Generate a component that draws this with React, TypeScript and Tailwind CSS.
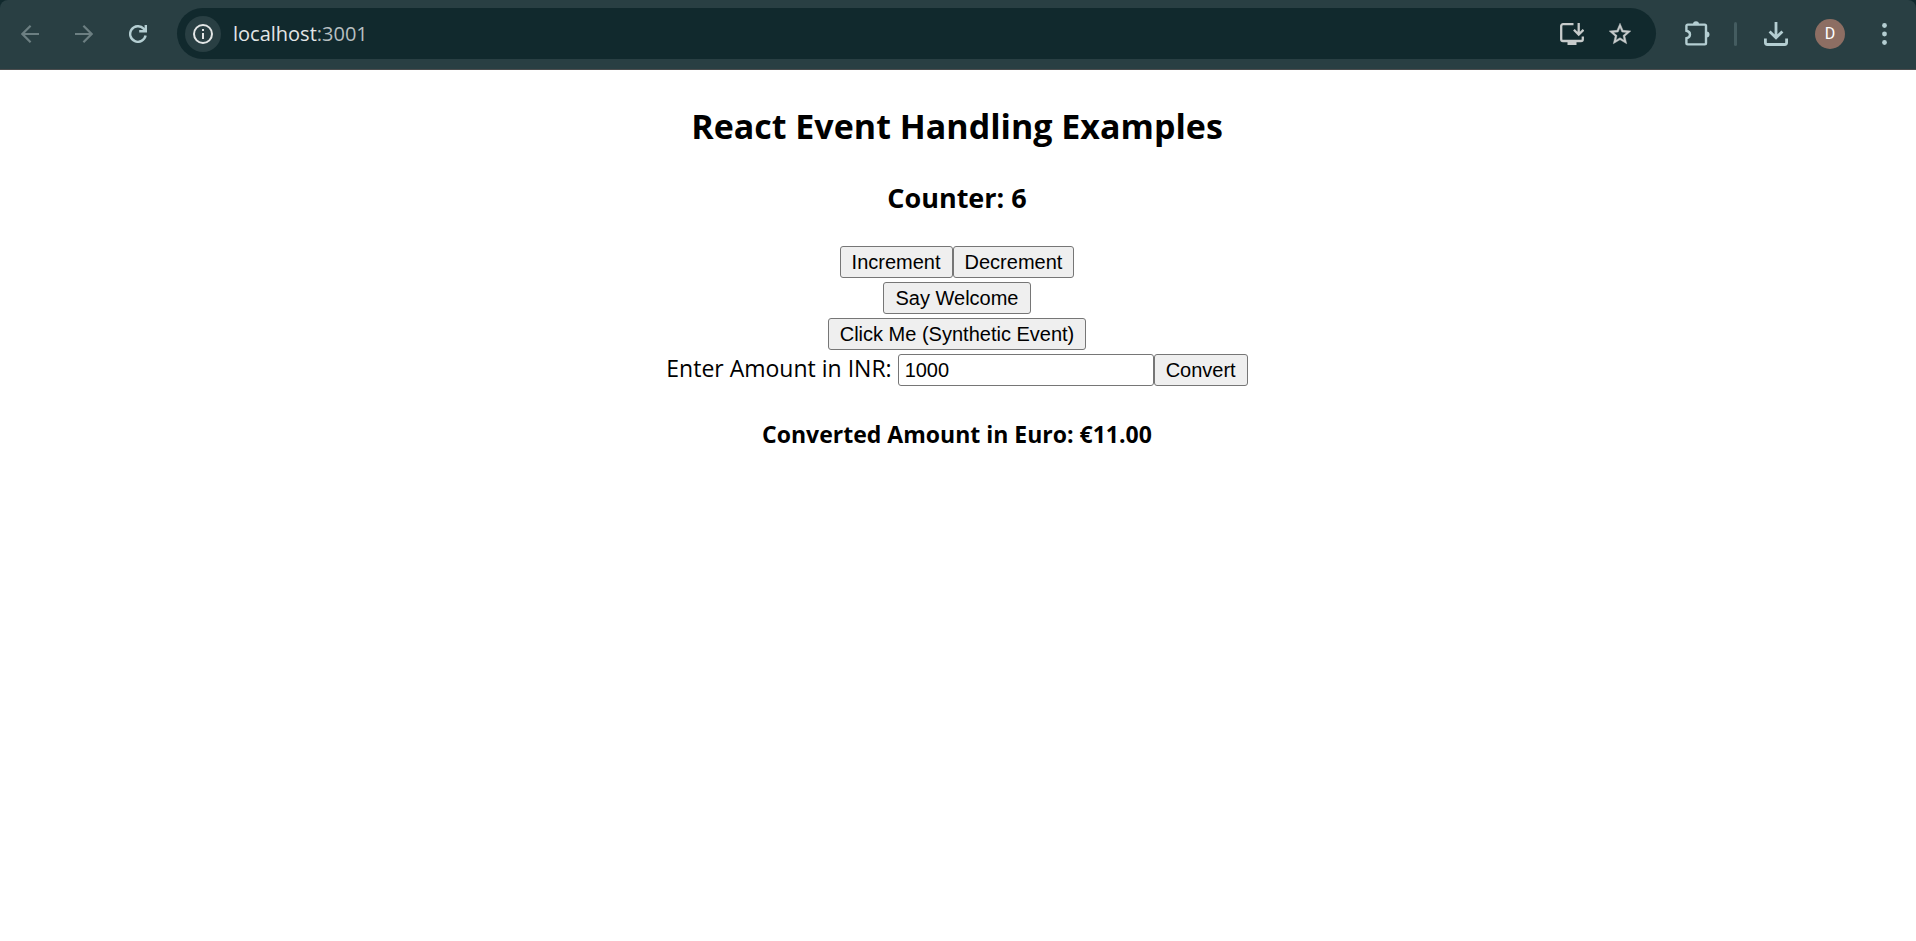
import { useState } from "react";
import type { ReactNode } from "react";

function ToolbarButton({
  label,
  disabled = false,
  children,
}: {
  label: string;
  disabled?: boolean;
  children: ReactNode;
}) {
  return (
    <button
      type="button"
      aria-label={label}
      disabled={disabled}
      className="flex size-9 shrink-0 items-center justify-center rounded-full text-[#b4ced2] disabled:text-[#6c7f82]"
    >
      {children}
    </button>
  );
}

function BrowserBar() {
  return (
    <div className="bg-[#11292d]">
      <header className="flex h-[70px] items-center rounded-t-lg border-b border-[#4b4d4e] bg-[#293f43] pr-3.5 pb-0.5 pl-3">
        <nav className="flex gap-[18px]" aria-label="History">
          <ToolbarButton label="Back" disabled>
            <svg className="size-[18px]" viewBox="0 0 18 18" fill="none" stroke="currentColor" strokeWidth="2.2">
              <path d="M18 9H1.6M9.6 .8 1.4 9l8.2 8.2" />
            </svg>
          </ToolbarButton>
          <ToolbarButton label="Forward" disabled>
            <svg className="size-[18px]" viewBox="0 0 18 18" fill="none" stroke="currentColor" strokeWidth="2.2">
              <path d="M0 9h16.4M8.4 .8 16.6 9l-8.2 8.2" />
            </svg>
          </ToolbarButton>
          <ToolbarButton label="Reload">
            <svg className="size-[18px]" viewBox="0 0 18 18" fill="none" stroke="currentColor" strokeWidth="2.4">
              <path d="M16.6 10.6A7.8 7.8 0 1 1 14.6 3.6L16.4 5.600" />
              <path d="M16.800 0v6.200h-6.600" />
            </svg>
          </ToolbarButton>
        </nav>

        <div className="ml-[21px] flex h-[51px] min-w-0 flex-1 items-center rounded-full bg-[#11292d] pr-[18px] pl-2">
          <button
            type="button"
            aria-label="View site information"
            className="flex size-9 shrink-0 items-center justify-center rounded-full bg-[#293f43] text-[#e3e6e6]"
          >
            <svg className="size-5" viewBox="0 0 20 20" fill="none" stroke="currentColor" strokeWidth="2">
              <circle cx="10" cy="10" r="9" />
              <path d="M10 9v6M10 5v2" />
            </svg>
          </button>
          <p className="ml-3 flex-1 truncate font-['Open_Sans','Noto_Sans',sans-serif] text-[20px] leading-7 text-[#e3e6e6]">
            localhost<span className="text-[#b7bfc0]">:3001</span>
          </p>
          <div className="flex gap-3 text-[#c7cbcb]">
            <button type="button" aria-label="Install app" className="flex size-9 items-center justify-center">
              <svg className="size-6" viewBox="0 0 24 24" fill="none" stroke="currentColor" strokeWidth="2.3">
                <path d="M13.500 2.200H3a1.800 1.800 0 0 0-1.800 1.800v13.200A1.800 1.800 0 0 0 3 19h18a1.800 1.800 0 0 0 1.800-1.800V14.500" />
                <path d="M18.700 1v11.500M13.900 7.800l4.800 4.800 4.800-4.800" />
                <path d="M7.500 19.500h9V23h-9z" fill="currentColor" stroke="none" />
              </svg>
            </button>
            <button type="button" aria-label="Bookmark this tab" className="flex size-9 items-center justify-center">
              <svg className="size-[26px]" viewBox="0 0 24 24" fill="currentColor" stroke="currentColor" strokeWidth=".4">
                <path d="m22 9.24-7.19-.62L12 2 9.19 8.63 2 9.24l5.46 4.73L5.82 21 12 17.27 18.18 21l-1.63-7.03zM12 15.4l-3.76 2.27 1-4.28-3.32-2.88 4.38-.38L12 6.1l1.71 4.04 4.38.38-3.32 2.88 1 4.28z" />
              </svg>
            </button>
          </div>
        </div>

        <div className="ml-[23px] flex items-center">
          <ToolbarButton label="Extensions">
            <svg className="size-[26px]" viewBox="0 0 26 26" fill="none" stroke="currentColor" strokeWidth="2.4">
              <path d="M3.700 3.600h17a1.300 1.300 0 0 1 1.300 1.300v17.200a1.300 1.300 0 0 1-1.300 1.300h-17a1.300 1.300 0 0 1-1.300-1.300v-4.800C4.600 16.900 6 15.400 6 13.500S4.600 10.100 2.400 9.700V4.900a1.300 1.300 0 0 1 1.300-1.300Z" />
              <path d="M9 3.200a3 3 0 0 1 6 0zM22.500 10.500a3 3 0 0 1 0 6z" fill="currentColor" stroke="none" />
            </svg>
          </ToolbarButton>
          <div className="mr-[21px] ml-[19px] h-6 w-[3px] rounded-full bg-[#445c60]" />
          <ToolbarButton label="Downloads">
            <svg className="size-6" viewBox="0 0 24 24" fill="none" stroke="currentColor" strokeWidth="2.800">
              <path d="M12 0v15M5.600 9.400 12 15.800l6.400-6.400" />
              <path d="M1.400 16.500v4a2 2 0 0 0 2 2h17.200a2 2 0 0 0 2-2v-4" />
            </svg>
          </ToolbarButton>
          <button
            type="button"
            aria-label="Profile"
            className="mx-[21px] flex size-[30px] items-center justify-center rounded-full bg-[#8d6e63] font-[Roboto,sans-serif] text-base text-white"
          >
            D
          </button>
          <ToolbarButton label="Menu">
            <svg className="h-[22px] w-[5px]" viewBox="0 0 5 22" fill="currentColor">
              <circle cx="2.5" cy="2.5" r="2.400" />
              <circle cx="2.5" cy="11" r="2.400" />
              <circle cx="2.5" cy="19.5" r="2.400" />
            </svg>
          </ToolbarButton>
        </div>
      </header>
    </div>
  );
}

function PageButton({ onClick, children }: { onClick?: () => void; children: ReactNode }) {
  return (
    <button
      type="button"
      onClick={onClick}
      className="h-8 rounded-[3px] border border-[#767676] bg-[#efefef] px-[11px] font-['Liberation_Sans',Arial,sans-serif] text-[20px] leading-7 text-black"
    >
      {children}
    </button>
  );
}

export default function App() {
  const [count, setCount] = useState(6);
  const [amount, setAmount] = useState("1000");
  const [euro, setEuro] = useState(11);

  return (
    <div className="min-h-screen bg-white">
      <BrowserBar />
      <main className="flex flex-col items-center pt-8 pr-0.5 font-['Open_Sans','Noto_Sans',sans-serif] text-black">
        <h1 className="text-[34px] leading-12 font-bold">React Event Handling Examples</h1>
        <h2 className="mt-7 text-[27px] leading-10 font-bold">Counter: {count}</h2>
        <div className="mt-7 flex flex-col items-center gap-1">
          <div className="flex">
            <PageButton onClick={() => setCount(count + 1)}>Increment</PageButton>
            <PageButton onClick={() => setCount(count - 1)}>Decrement</PageButton>
          </div>
          <PageButton>Say Welcome</PageButton>
          <PageButton>Click Me (Synthetic Event)</PageButton>
          <div className="flex items-start">
            <label htmlFor="inr" className="mr-1.5 text-[23px] leading-7">
              Enter Amount in INR:
            </label>
            <input
              id="inr"
              type="text"
              value={amount}
              onChange={(event) => setAmount(event.target.value)}
              className="h-8 w-64 rounded-[3px] border border-[#767676] bg-white px-1.5 font-['Liberation_Sans',Arial,sans-serif] text-[20px] leading-7"
            />
            <PageButton onClick={() => setEuro(Number(amount) * 0.011)}>Convert</PageButton>
          </div>
        </div>
        <h3 className="mt-8 text-[23px] leading-8 font-bold">
          Converted Amount in Euro: €{euro.toFixed(2)}
        </h3>
      </main>
    </div>
  );
}
